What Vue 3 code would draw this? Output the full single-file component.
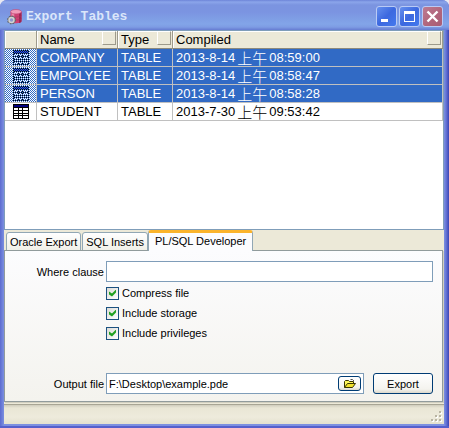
<script setup>
import { ref } from 'vue'

const rows = ref([
  { name: 'COMPANY', type: 'TABLE', date: '2013-8-14', time: '08:59:00', selected: true },
  { name: 'EMPOLYEE', type: 'TABLE', date: '2013-8-14', time: '08:58:47', selected: true },
  { name: 'PERSON', type: 'TABLE', date: '2013-8-14', time: '08:58:28', selected: true },
  { name: 'STUDENT', type: 'TABLE', date: '2013-7-30', time: '09:53:42', selected: false }
])
const columns = ['Name', 'Type', 'Compiled']
const tabs = ['Oracle Export', 'SQL Inserts', 'PL/SQL Developer']
const activeTab = ref('PL/SQL Developer')
const whereClause = ref('')
const outputFile = ref('F:\\Desktop\\example.pde')
const options = ref([
  { id: 'compress', label: 'Compress file', checked: true },
  { id: 'storage', label: 'Include storage', checked: true },
  { id: 'privileges', label: 'Include privileges', checked: true }
])
</script>

<template>
  <div class="window">
    <header class="titlebar">
      <svg class="app-icon" viewBox="0 0 16 16" width="16" height="16" aria-hidden="true">
        <path d="M3.500 3v9c0 3 11 3 11 0V3z" fill="#cf3f72" />
        <path d="M12 4v10c1.700-.4 2.500-1 2.500-2V3z" fill="#9c2753" />
        <path d="M4.500 4v8c1 1 1.800 1.500 2.800 1.600V4z" fill="#ea86a8" />
        <ellipse cx="9" cy="2.700" rx="5.500" ry="2.200" fill="#f09cba" stroke="#c04573" stroke-width=".6" />
        <path d="M3.500 6.500c1 2 10 2 11 0M3.500 9.500c1 2 10 2 11 0" fill="none" stroke="#a93460" stroke-width=".6" />
        <circle cx="4.500" cy="11" r="3.700" fill="none" stroke="#63666c" stroke-width="1.600" stroke-dasharray="1.500 1.400" />
        <circle cx="4.500" cy="11" r="2.500" fill="none" stroke="#63666c" stroke-width="2.400" />
        <circle cx="4.500" cy="11" r="2.500" fill="#8b9ad0" stroke="#d4d4d0" stroke-width="1.500" />
      </svg>
      <h1>Export Tables</h1>
      <div class="window-buttons">
        <button type="button" aria-label="Minimize">
          <svg viewBox="0 0 19 19"><path d="M4 12h7v3H4z" fill="#fff" /></svg>
        </button>
        <button type="button" aria-label="Maximize">
          <svg viewBox="0 0 19 19"><path d="M4 4h11v11H4zM5 7v7h9V7z" fill="#fff" fill-rule="evenodd" /></svg>
        </button>
        <button type="button" class="close" aria-label="Close">
          <svg viewBox="0 0 19 19"><path d="M4.500 4.500l10 10M14.500 4.500l-10 10" stroke="#fff" stroke-width="2.400" /></svg>
        </button>
      </div>
    </header>

    <main class="content">
      <div class="list">
        <table>
          <colgroup>
            <col class="col-icon" /><col class="col-name" /><col class="col-type" /><col />
          </colgroup>
          <thead>
            <tr>
              <th></th>
              <th v-for="column in columns" :key="column">
                <div class="heading">
                  <span>{{ column }}</span>
                  <button type="button" :aria-label="column"></button>
                </div>
              </th>
            </tr>
          </thead>
          <tbody>
            <tr v-for="row in rows" :key="row.name" :class="{ selected: row.selected }">
              <td class="icon-cell">
                <div class="row-icon">
                  <svg viewBox="0 0 16 15" width="16" height="15" shape-rendering="crispEdges">
                    <path d="M0 0h16v15H0z" fill="#000" />
                    <path d="M1 1h14v2H1z" fill="#000080" />
                    <path
                      d="M1 4h4v2H1zM6 4h3v2H6zM10 4h5v2h-5zM1 7h4v2H1zM6 7h3v2H6zM10 7h5v2h-5zM1 10h4v1H1zM6 10h3v1H6zM10 10h5v1h-5zM1 12h4v2H1zM6 12h3v2H6zM10 12h5v2h-5z"
                      fill="#fff"
                    />
                  </svg>
                  <svg v-if="row.selected" class="dither" shape-rendering="crispEdges" aria-hidden="true">
                    <pattern :id="'dither-' + row.name" width="2" height="2" patternUnits="userSpaceOnUse">
                      <path d="M0 0h1v1H0zM1 1h1v1H1z" fill="#316ac5" />
                    </pattern>
                    <rect width="100%" height="100%" :fill="`url(#dither-${row.name})`" />
                  </svg>
                </div>
              </td>
              <td>{{ row.name }}</td>
              <td>{{ row.type }}</td>
              <td>
                <div class="stamp">
                  <span>{{ row.date }}</span>
                  <span class="meridiem">上午</span>
                  <span>{{ row.time }}</span>
                </div>
              </td>
            </tr>
          </tbody>
        </table>
      </div>

      <div class="tabs" role="tablist">
        <button
          v-for="tab in tabs"
          :key="tab"
          type="button"
          role="tab"
          :aria-selected="activeTab === tab"
          :class="{ active: activeTab === tab }"
          @click="activeTab = tab"
        >
          {{ tab }}
        </button>
      </div>

      <form class="panel" @submit.prevent>
        <div class="field">
          <label for="where">Where clause</label>
          <input id="where" v-model="whereClause" class="box" type="text" />
        </div>
        <div class="options">
          <label v-for="option in options" :key="option.id" :for="option.id">
            <input :id="option.id" v-model="option.checked" type="checkbox" />
            {{ option.label }}
          </label>
        </div>
        <div class="field output">
          <label for="output">Output file</label>
          <div class="box file-box">
            <input id="output" v-model="outputFile" type="text" />
            <button type="button" class="browse" aria-label="Browse">
              <svg viewBox="0 0 14 12" width="14" height="12">
                <path d="M1.500 9.500v-6l1-1h3l1 1h4v2" fill="#fff85a" stroke="#3a3600" />
                <path d="M1.500 9.500l3-4h8l-3 4z" fill="#f2e22a" stroke="#3a3600" />
                <path d="M7.500 1.500h2l1.500 1.500" fill="none" stroke="#555" />
              </svg>
            </button>
          </div>
          <button type="submit" class="export">Export</button>
        </div>
      </form>
    </main>

    <footer class="statusbar">
      <svg viewBox="0 0 12 12" width="12" height="12" shape-rendering="crispEdges" aria-hidden="true">
        <path d="M9 1h2v2H9zM5 5h2v2H5zM9 5h2v2H9zM1 9h2v2H1zM5 9h2v2H5zM9 9h2v2H9z" fill="#fff" />
        <path d="M8 0h2v2H8zM4 4h2v2H4zM8 4h2v2H8zM0 8h2v2H0zM4 8h2v2H4zM8 8h2v2H8z" fill="#b8b4a2" />
      </svg>
    </footer>
  </div>
</template>

<style>
body {
  margin: 0;
  background: #e9e9f2;
}
</style>

<style scoped>
.window {
  display: flex;
  flex-direction: column;
  box-sizing: border-box;
  min-height: 100vh;
  padding: 0 5px 4px 4px;
  border-radius: 7px 7px 0 0;
  background: linear-gradient(90deg, #5c6bd0, #7c90e0 4px, #7c90e0 calc(100% - 5px), #6676d6 calc(100% - 3px), #3c45b4);
  box-shadow: inset 0 -2px #5560cc;
  font-family: "Liberation Sans", Arial, "Noto Sans CJK SC", sans-serif;
  font-size: 11px;
  color: #000;
}

button,
input {
  box-sizing: border-box;
  margin: 0;
  padding: 0;
  font: inherit;
  color: inherit;
}

.titlebar {
  display: flex;
  align-items: center;
  box-sizing: border-box;
  height: 30px;
  margin: 0 -5px 0 -4px;
  padding: 3px 6px 0 7px;
  border-radius: 7px 7px 0 0;
  background: linear-gradient(#6d84d8, #8ba5ea 2px, #7b94e0 5px, #7b94e1 12px, #82a5e8 24px, #7e9ce4 27px, #667cd2);
}

.titlebar h1 {
  flex: 1;
  margin: 0 0 0 3px;
  font: bold 13px/16px "Liberation Mono", monospace;
  color: #dbe6fa;
}

.window-buttons {
  display: flex;
  gap: 2px;
}

.window-buttons button {
  width: 21px;
  height: 21px;
  border: 1px solid #b9caf5;
  border-radius: 3px;
  background: linear-gradient(135deg, #6690ee, #3c68df 50%, #4479ee);
}

.window-buttons .close {
  background: linear-gradient(135deg, #bd7b91, #b0647b 60%, #a95d76);
}

.window-buttons svg {
  display: block;
  width: 19px;
  height: 19px;
}

.content {
  display: flex;
  flex: 1;
  flex-direction: column;
  background: #ece9d8;
}

.list {
  box-sizing: border-box;
  height: 200px;
  border: 1px solid #7f9db9;
  background: #fff;
}

table {
  width: 100%;
  table-layout: fixed;
  border-spacing: 0;
  font-size: 13px;
  line-height: 17px;
}

.col-icon { width: 32px; }
.col-name { width: 81px; }
.col-type { width: 55px; }

th {
  height: 17px;
  padding: 0 1px 0 3px;
  border-right: 1px solid #9d9a8b;
  border-bottom: 1px solid #8c897c;
  box-shadow: inset 1px 1px #fff;
  background: #ece9d8;
  font-weight: normal;
  text-align: left;
}

.heading {
  display: flex;
  justify-content: space-between;
  height: 17px;
}

.heading button {
  width: 14px;
  height: 14px;
  border: 1px solid;
  border-color: #fff #9d9a8b #9d9a8b #fff;
  background: #ece9d8;
}

td {
  height: 17px;
  padding: 0 0 0 3px;
  border-right: 1px solid #c0c0c0;
  border-bottom: 1px solid #c0c0c0;
  white-space: nowrap;
}

.selected td {
  background: #316ac5;
  color: #fff;
}

td.icon-cell,
.selected td.icon-cell {
  padding: 0;
  background: #fff;
}

.row-icon {
  display: grid;
  place-items: center;
  height: 17px;
}

.row-icon > svg {
  grid-area: 1 / 1;
}

.dither {
  display: block;
  width: 100%;
  height: 17px;
}

.stamp {
  display: flex;
  gap: 2px;
  height: 17px;
}

.meridiem {
  font-family: "Noto Sans CJK SC", sans-serif;
  font-size: 15px;
  font-weight: 300;
}

.tabs {
  display: flex;
  align-items: flex-end;
  height: 21px;
  margin-bottom: -1px;
  padding-left: 2px;
}

.tabs button {
  height: 19px;
  margin-right: 1px;
  padding: 0 3px;
  border: 1px solid #91a7b4;
  border-radius: 3px 3px 0 0;
  background: linear-gradient(#fff, #f0f0e8);
  white-space: nowrap;
}

.tabs .active {
  z-index: 1;
  height: 21px;
  margin-left: -1px;
  padding: 0 6px 2px;
  border-top: 3px solid #fbb42c;
  border-bottom: 0;
  background: #fcfcfe;
}

.panel {
  display: flex;
  flex: 1;
  flex-direction: column;
  margin: 0 1px 2px 0;
  padding: 10px 9px 7px 5px;
  border: 1px solid #919b9c;
  box-shadow: 1px 1px #d0cebf;
  background: linear-gradient(#fcfcfe, #f4f3ee);
}

.field {
  display: flex;
  align-items: center;
}

.field label {
  width: 94px;
  margin-right: 2px;
  text-align: right;
}

.box {
  flex: 1;
  min-width: 0;
  height: 21px;
  padding: 0 2px;
  border: 1px solid #7f9db9;
  background: #fff;
}

.options {
  display: grid;
  gap: 6px;
  justify-items: start;
  margin: 4px 0 0 96px;
}

.options label {
  display: flex;
  align-items: center;
  gap: 3px;
  height: 14px;
}

.options input {
  width: 13px;
  height: 13px;
  appearance: none;
  border: 1px solid #1c5180;
  background: linear-gradient(135deg, #dcdcd7, #fff);
}

.options input:checked::after {
  content: "";
  display: block;
  width: 7px;
  height: 7px;
  margin: 2px;
  background: #21a121;
  clip-path: polygon(0 29%, 43% 57%, 100% 0, 100% 43%, 43% 100%, 0 71%);
}

.output {
  margin-top: auto;
}

.file-box {
  display: flex;
  align-items: center;
  box-sizing: border-box;
  padding-right: 2px;
}

.file-box input {
  flex: 1;
  min-width: 0;
  border: 0;
  background: none;
}

.browse,
.export {
  border: 1px solid #003c74;
  border-radius: 3px;
  background: linear-gradient(#fff, #f4f3ee 80%, #dcd8cb);
}

.browse {
  display: grid;
  place-items: center;
  width: 23px;
  height: 15px;
}

.export {
  width: 60px;
  height: 21px;
  margin-left: 9px;
}

.statusbar {
  display: flex;
  align-items: flex-end;
  justify-content: flex-end;
  box-sizing: border-box;
  height: 20px;
  padding: 0 1px 1px;
  border-top: 1px solid #a8a594;
  background: linear-gradient(#d0cdbd, #e9e6d5 3px, #eeebdc 12px, #e4e1cf);
}
</style>
